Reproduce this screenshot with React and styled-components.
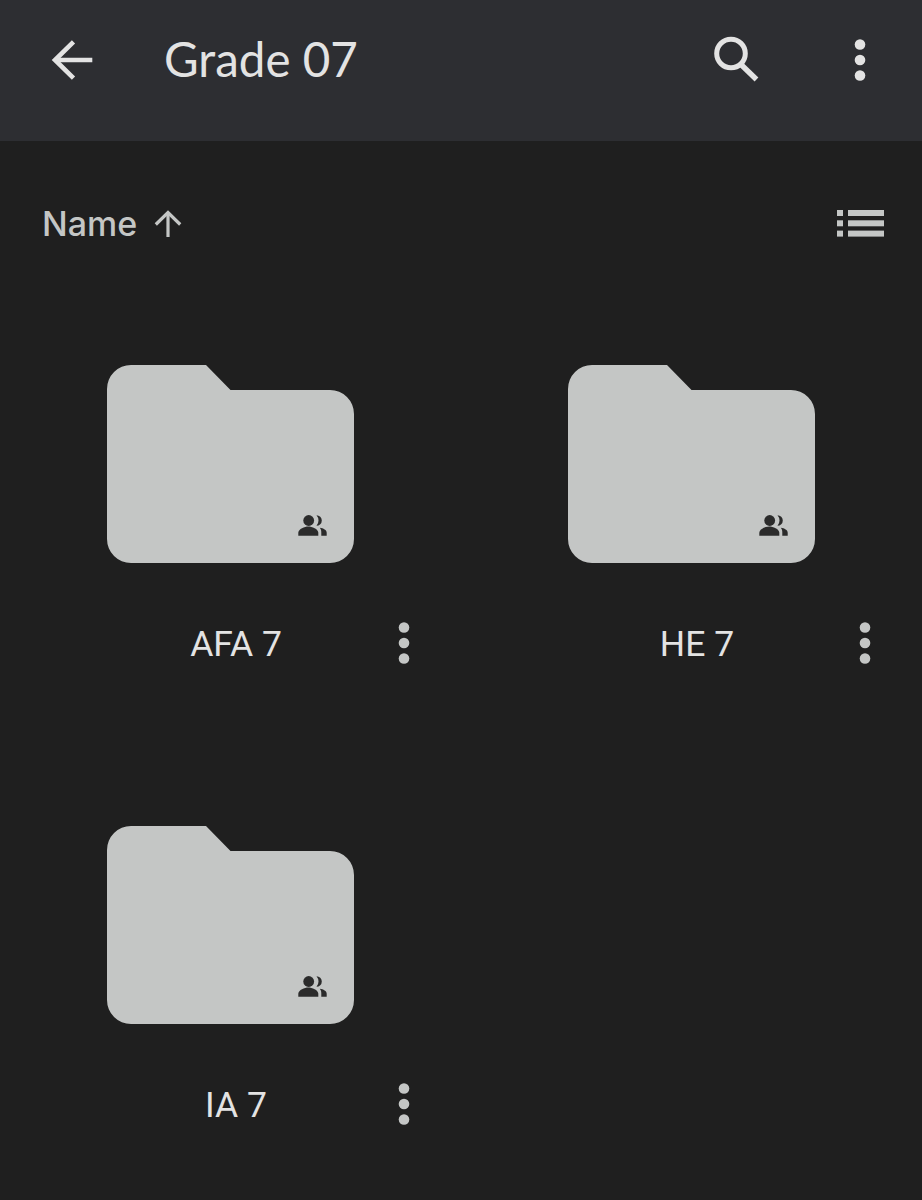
import React from 'react';
import styled, { createGlobalStyle } from 'styled-components';

const GlobalStyle = createGlobalStyle`
  html, body {
    margin: 0;
    padding: 0;
    background: #1f1f1f;
  }
`;

const Page = styled.div`
  height: 100vh;
  overflow: hidden;
  background: #1f1f1f;
  font-family: 'Roboto', 'Liberation Sans', sans-serif;
`;

const Header = styled.header`
  height: 141px;
  box-sizing: border-box;
  padding: 0 38px 21px 48px;
  background: #2d2e32;
  display: flex;
  align-items: center;
`;

const Title = styled.h1`
  flex: 1;
  margin: 0 0 2px 68px;
  color: #e3e3e3;
  font-family: 'Lato', 'Open Sans', sans-serif;
  font-size: 47.5px;
  font-weight: 400;
  line-height: 48px;
`;

const IconBox = styled.svg`
  display: block;
  flex: none;
  width: ${(p) => p.$w || 48}px;
  height: ${(p) => p.$h || 48}px;
  margin-left: ${(p) => p.$gap || 0}px;
`;

const SortBar = styled.div`
  height: 165px;
  box-sizing: border-box;
  padding: 0 38px 0 42px;
  display: flex;
  align-items: center;
  justify-content: space-between;
`;

const SortButton = styled.div`
  display: flex;
  align-items: center;
  gap: 17px;
  color: #c4c6c5;
`;

const SortLabel = styled.span`
  font-family: 'Inter', 'Roboto', sans-serif;
  font-size: 34px;
  font-weight: 500;
  line-height: 48px;
`;

const Grid = styled.div`
  display: grid;
  grid-template-columns: 461px 461px;
  grid-auto-rows: 461px;
`;

const Cell = styled.div`
  padding-top: 59px;
`;

const FolderBox = styled.svg`
  display: block;
  width: 247px;
  height: 198px;
  margin-left: 107px;
`;

const Caption = styled.div`
  margin-top: 56px;
  height: 48px;
  padding-left: 76px;
  display: flex;
  align-items: center;
`;

const FolderName = styled.span`
  width: 320px;
  padding-top: 2px;
  text-align: center;
  color: #e3e3e3;
  font-size: 35.5px;
  line-height: 48px;
`;

const Dots = ({ color, w = 48, gap }) => (
  <IconBox $w={w} $gap={gap} viewBox={`0 0 ${w} 48`} fill={color}>
    <circle cx={w / 2} cy="8.5" r="5.3" />
    <circle cx={w / 2} cy="24" r="5.3" />
    <circle cx={w / 2} cy="39.5" r="5.3" />
  </IconBox>
);

const BackIcon = () => (
  <IconBox viewBox="0 0 48 48" fill="none" stroke="#e3e3e3" strokeWidth="4.6">
    <path d="M44.3 24H7.5" />
    <path d="M25.5 5.8L7 24l18.5 18.2" />
  </IconBox>
);

const SearchIcon = () => (
  <IconBox viewBox="0 0 48 48" fill="none" stroke="#e3e3e3" $gap={76}>
    <circle cx="19" cy="17.5" r="14.3" strokeWidth="5" />
    <path d="M29 28.5L44.5 43.5" strokeWidth="5.4" />
  </IconBox>
);

const UpArrow = () => (
  <IconBox $w={28} $h={28} viewBox="0 0 28 28" fill="none" stroke="#c4c6c5" strokeWidth="3.2">
    <path d="M14 27V2.5" />
    <path d="M1.8 14.5L14 2.5l12.2 12" />
  </IconBox>
);

const ListIcon = () => (
  <IconBox $w={47} $h={28} viewBox="0 0 47 28" fill="#c4c6c5">
    <rect x="0" y="0" width="6" height="6" />
    <rect x="0" y="10.3" width="6" height="6" />
    <rect x="0" y="20.6" width="6" height="6" />
    <rect x="11" y="0" width="36" height="6" />
    <rect x="11" y="10.3" width="36" height="6" />
    <rect x="11" y="20.6" width="36" height="6" />
  </IconBox>
);

const Folder = () => (
  <FolderBox viewBox="0 0 247 198">
    <path
      fill="#c4c6c5"
      d="M24 0H99L123.5 25H223a24 24 0 0 1 24 24V174a24 24 0 0 1-24 24H24a24 24 0 0 1-24-24V24A24 24 0 0 1 24 0Z"
    />
    <g fill="#2b2b2b">
      <circle cx="201.7" cy="155.5" r="5.4" />
      <path d="M191.3 170.8v-3c0-4 6.5-6.3 10-6.3s10 2.3 10 6.3v3Z" />
      <path d="M209.5 150.2a5.3 5.3 0 0 1 0 10.6Q211.5 158.5 211.5 155.5T209.5 150.2Z" />
      <path d="M212.8 162.8c3.6.5 6.9 2.2 6.9 5v3h-5.4v-3.4c0-1.8-.5-3.3-1.5-4.6Z" />
    </g>
  </FolderBox>
);

const folders = ['AFA 7', 'HE 7', 'IA 7'];

const App = () => {
  return (
    <Page>
      <GlobalStyle />
      <Header>
        <BackIcon />
        <Title>Grade 07</Title>
        <SearchIcon />
        <Dots color="#e3e3e3" gap={76} />
      </Header>
      <SortBar>
        <SortButton>
          <SortLabel>Name</SortLabel>
          <UpArrow />
        </SortButton>
        <ListIcon />
      </SortBar>
      <Grid>
        {folders.map((name) => (
          <Cell key={name}>
            <Folder />
            <Caption>
              <FolderName>{name}</FolderName>
              <Dots color="#c4c6c5" w={16} />
            </Caption>
          </Cell>
        ))}
      </Grid>
    </Page>
  );
};

export default App;
